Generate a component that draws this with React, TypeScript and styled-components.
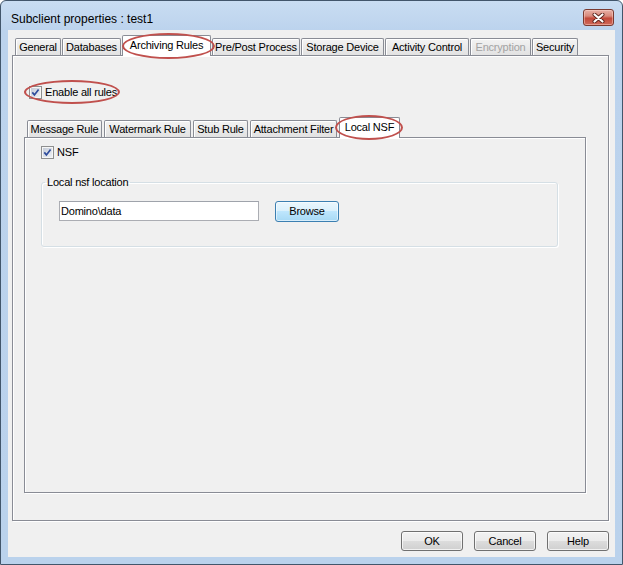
import React, { useId } from 'react'
import styled, { createGlobalStyle } from 'styled-components'

const GlobalStyle = createGlobalStyle`
  html, body {
    margin: 0;
    padding: 0;
    background: #ffffff;
  }
  body {
    font-family: "Liberation Sans", Arial, sans-serif;
    font-size: 11px;
    letter-spacing: -0.2px;
    color: #000;
  }
  * {
    box-sizing: border-box;
  }
`

const Window = styled.div`
  position: relative;
  width: 623px;
  height: 565px;
  border: 1px solid #42566b;
  border-radius: 6px 6px 0 0;
  background: linear-gradient(to bottom, #c9ddf2 0px, #bcd3ed 29px, #bad2ec 100%);
  display: flex;
  flex-direction: column;
  overflow: hidden;
`

const TitleBar = styled.div`
  height: 29px;
  flex: none;
  display: flex;
  justify-content: space-between;
  padding: 0 8px 0 10px;
`

const Title = styled.span`
  font-size: 12px;
  letter-spacing: 0;
  line-height: 14px;
  margin-top: 11px;
  color: #000;
`

const CloseButton = styled.div`
  width: 31px;
  height: 17px;
  margin-top: 8px;
  border: 1px solid #7a3a30;
  border-radius: 3px;
  background: linear-gradient(to bottom, #e8b0a6 0%, #d98a7c 40%, #c2493a 55%, #cf6a5a 100%);
  box-shadow: inset 0 0 0 1px rgba(255, 220, 210, 0.45);
  display: flex;
  align-items: center;
  justify-content: center;
`

const Client = styled.div`
  flex: 1;
  margin: 0 7px 7px;
  background: #f0f0f0;
  display: flex;
  flex-direction: column;
  padding: 5px 6px 6px 4px;
`

const TabStrip = styled.div<{ $gap: number }>`
  display: flex;
  align-items: flex-end;
  gap: ${p => p.$gap}px;
  height: 21px;
  margin-bottom: -1px;
  padding-left: 3px;
  position: relative;
  z-index: 2;
  flex: none;
`

const Tab = styled.div<{ $w: number; $active?: boolean; $disabled?: boolean }>`
  width: ${p => p.$w}px;
  height: ${p => (p.$active ? 21 : 17)}px;
  margin-bottom: ${p => (p.$active ? 0 : 1)}px;
  border: 1px solid #898c95;
  border-bottom: none;
  border-radius: 2px 2px 0 0;
  background: ${p => (p.$active ? '#ffffff' : 'linear-gradient(to bottom, #f3f3f3, #e2e2e2)')};
  box-shadow: inset 1px 1px 0 #ffffff;
  color: ${p => (p.$disabled ? '#a3a3a3' : '#000')};
  display: flex;
  align-items: center;
  justify-content: center;
  white-space: nowrap;
  line-height: 13px;
  padding-bottom: ${p => (p.$active ? 1 : 0)}px;
`

const Panel = styled.div<{ $pad: string }>`
  flex: 1;
  border: 1px solid #898c95;
  background: #f0f0f0;
  box-shadow: inset 1px 1px 0 #ffffff, 1px 1px 0 #ffffff;
  display: flex;
  flex-direction: column;
  padding: ${p => p.$pad};
  min-height: 0;
`

const CheckRow = styled.label<{ $indent?: number }>`
  display: flex;
  align-items: center;
  gap: 3px;
  height: 13px;
  margin-left: ${p => p.$indent ?? 0}px;
  line-height: 13px;
  flex: none;
`

const Spacer = styled.div<{ $h: number }>`
  height: ${p => p.$h}px;
  flex: none;
`

const Group = styled.fieldset`
  margin: 17px 0 0 0;
  padding: 12px 0 24px 3px;
  border: 1px solid #d5dfe5;
  border-radius: 3px;
  box-shadow: inset 1px 1px 0 #ffffff, 1px 1px 0 #ffffff;
  min-width: 0;
`

const GroupLabel = styled.legend`
  padding: 0 2px;
  line-height: 13px;
  height: 13px;
`

const FieldRow = styled.div`
  display: flex;
  align-items: flex-start;
  gap: 16px;
  padding-left: 14px;
`

const TextField = styled.div`
  width: 200px;
  height: 20px;
  border: 1px solid #abadb3;
  border-top-color: #9fa3ab;
  background: #ffffff;
  padding-left: 1px;
  display: flex;
  align-items: center;
  line-height: 13px;
`

const Button = styled.div<{ $w: number; $default?: boolean }>`
  width: ${p => p.$w}px;
  height: ${p => (p.$default ? 21 : 20)}px;
  border: 1px solid ${p => (p.$default ? '#3c7fb1' : '#707070')};
  border-radius: 3px;
  background: ${p =>
    p.$default
      ? 'linear-gradient(to bottom, #eaf6fd 0%, #d9f0fc 49%, #bee6fd 50%, #a7d9f5 100%)'
      : 'linear-gradient(to bottom, #f2f2f2 0%, #ebebeb 49%, #dddddd 50%, #cfcfcf 100%)'};
  box-shadow: inset 0 0 0 1px ${p => (p.$default ? 'rgba(255,255,255,0.55)' : 'rgba(255,255,255,0.7)')};
  display: flex;
  align-items: center;
  justify-content: center;
  line-height: 13px;
  color: #000;
`

const ButtonRow = styled.div`
  display: flex;
  justify-content: flex-end;
  gap: 11px;
  margin-top: 10px;
  flex: none;
`

const Highlight = styled.div<{ $x: number; $y: number; $w: number; $h: number }>`
  position: absolute;
  left: ${p => p.$x - 1}px;
  top: ${p => p.$y - 1}px;
  width: ${p => p.$w}px;
  height: ${p => p.$h}px;
  border: 2px solid #c0504d;
  border-radius: 50%;
  pointer-events: none;
  z-index: 10;
`

const CheckBox: React.FC = () => {
  const id = useId().replace(/:/g, '')
  return (
    <svg width="13" height="13" viewBox="0 0 13 13">
      <defs>
        <linearGradient id={`cb${id}`} x1="0" y1="0" x2="1" y2="1">
          <stop offset="0" stopColor="#c5ccd8" />
          <stop offset="1" stopColor="#eef0f4" />
        </linearGradient>
      </defs>
      <rect x="0.5" y="0.5" width="12" height="12" fill="#f6f6f6" stroke="#8e8f8f" />
      <rect x="2" y="2" width="9" height="9" fill={`url(#cb${id})`} />
      <path d="M3.3 6.4 L5.4 8.9 L9.6 3.4" fill="none" stroke="#2f4c9c" strokeWidth="1.7" />
    </svg>
  )
}

const CloseGlyph: React.FC = () => (
  <svg width="13" height="10" viewBox="0 0 13 10">
    <path d="M2.5 1.5 L10.5 8.5 M10.5 1.5 L2.5 8.5" stroke="#5b241c" strokeWidth="4" strokeLinecap="round" />
    <path d="M2.5 1.5 L10.5 8.5 M10.5 1.5 L2.5 8.5" stroke="#ffffff" strokeWidth="2.2" strokeLinecap="round" />
  </svg>
)

const mainTabs = [
  { label: 'General', w: 46 },
  { label: 'Databases', w: 59 },
  { label: 'Archiving Rules', w: 89, active: true },
  { label: 'Pre/Post Process', w: 88 },
  { label: 'Storage Device', w: 83 },
  { label: 'Activity Control', w: 84 },
  { label: 'Encryption', w: 61, disabled: true },
  { label: 'Security', w: 46 },
]

const ruleTabs = [
  { label: 'Message Rule', w: 75 },
  { label: 'Watermark Rule', w: 87 },
  { label: 'Stub Rule', w: 55 },
  { label: 'Attachment Filter', w: 87 },
  { label: 'Local NSF', w: 61, active: true },
]

const App: React.FC = () => {
  return (
    <>
      <GlobalStyle />
      <Window>
        <TitleBar>
          <Title>Subclient properties : test1</Title>
          <CloseButton>
            <CloseGlyph />
          </CloseButton>
        </TitleBar>
        <Client>
          <TabStrip $gap={1}>
            {mainTabs.map(t => (
              <Tab key={t.label} $w={t.w} $active={t.active} $disabled={t.disabled}>
                {t.label}
              </Tab>
            ))}
          </TabStrip>
          <Panel $pad="30px 22px 27px 11px">
            <CheckRow $indent={5}>
              <CheckBox />
              <span>Enable all rules</span>
            </CheckRow>
            <Spacer $h={18} />
            <TabStrip $gap={2}>
              {ruleTabs.map(t => (
                <Tab key={t.label} $w={t.w} $active={t.active}>
                  {t.label}
                </Tab>
              ))}
            </TabStrip>
            <Panel $pad="8px 27px 0 16px">
              <CheckRow>
                <CheckBox />
                <span>NSF</span>
              </CheckRow>
              <Group>
                <GroupLabel>Local nsf location</GroupLabel>
                <FieldRow>
                  <TextField>Domino\data</TextField>
                  <Button $w={64} $default>
                    Browse
                  </Button>
                </FieldRow>
              </Group>
            </Panel>
          </Panel>
          <ButtonRow>
            <Button $w={62}>OK</Button>
            <Button $w={62}>Cancel</Button>
            <Button $w={62}>Help</Button>
          </ButtonRow>
        </Client>
        <Highlight $x={122} $y={33} $w={93} $h={26} />
        <Highlight $x={24} $y={80} $w={96} $h={24} />
        <Highlight $x={335} $y={115} $w={68} $h={25} />
      </Window>
    </>
  )
}

export default App
